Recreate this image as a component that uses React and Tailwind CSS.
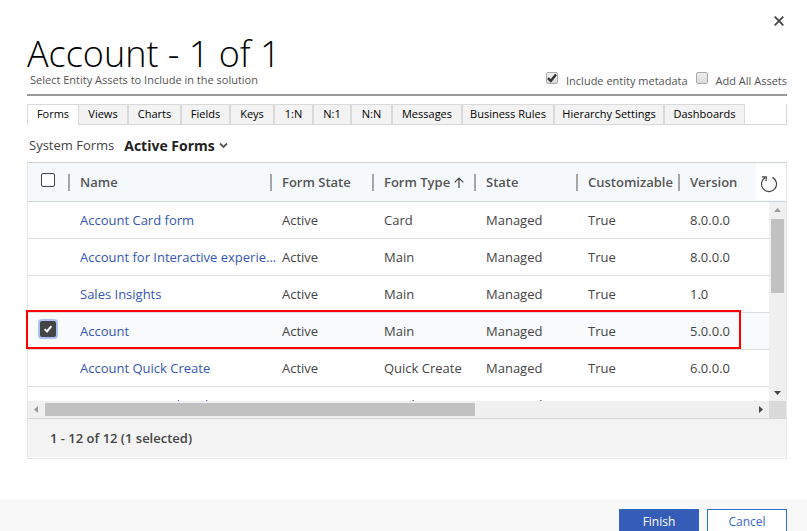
import React from "react";

const tabs = [
  ["Forms", "w-[52px]"],
  ["Views", "w-[50px]"],
  ["Charts", "w-[53px]"],
  ["Fields", "w-[49px]"],
  ["Keys", "w-[44px]"],
  ["1:N", "w-[39px]"],
  ["N:1", "w-[38px]"],
  ["N:N", "w-[41px]"],
  ["Messages", "w-[70px]"],
  ["Business Rules", "w-[92px]"],
  ["Hierarchy Settings", "w-[110px]"],
  ["Dashboards", "w-[80px]"],
];

const columns = [
  ["Name", "w-[202px]"],
  ["Form State", "w-[102px]"],
  ["Form Type", "w-[102px]"],
  ["State", "w-[102px]"],
  ["Customizable", "w-[102px]"],
  ["Version", ""],
];

const rows = [
  ["Account Card form", "Active", "Card", "Managed", "True", "8.0.0.0"],
  ["Account for Interactive experie...", "Active", "Main", "Managed", "True", "8.0.0.0"],
  ["Sales Insights", "Active", "Main", "Managed", "True", "1.0"],
  ["Account", "Active", "Main", "Managed", "True", "5.0.0.0"],
  ["Account Quick Create", "Active", "Quick Create", "Managed", "True", "6.0.0.0"],
  ["Account Hierarchy Tile Form", "Active", "Quick View", "Managed", "True", "5.0.0.0"],
];

function Check({ className }) {
  return (
    <svg viewBox="0 0 12 12" className={className} fill="none" stroke="currentColor" strokeWidth="2.4" aria-hidden="true">
      <path d="M2 6.2 4.8 9 10 2.6" />
    </svg>
  );
}

function Option({ label, checked }) {
  return (
    <label className="flex text-[11px] leading-4 text-[#555]">
      <span className="relative mr-2 h-3 w-3">
        <input
          type="checkbox"
          defaultChecked={checked}
          className="peer block h-3 w-3 appearance-none rounded-xs border border-[#aaa] bg-linear-to-b from-[#eee] to-[#dcdcdc]"
        />
        <Check className="pointer-events-none absolute inset-0 hidden h-3 w-3 text-[#333] peer-checked:block" />
      </span>
      <span className="pt-px">{label}</span>
    </label>
  );
}

export default function App() {
  return (
    <div className="flex h-screen flex-col overflow-hidden bg-white font-['Open_Sans','Noto_Sans',sans-serif] text-[#444]">
      <header className="px-5 pt-3.5">
        <div className="flex justify-end pr-px">
          <button aria-label="Close" className="flex h-3.5 w-3.5 items-center justify-center text-[#444]">
            <svg viewBox="0 0 10 10" className="h-2.5 w-2.5" stroke="currentColor" strokeWidth="1.8" aria-hidden="true">
              <path d="M.7.7 9.3 9.3M9.3.7.7 9.3" />
            </svg>
          </button>
        </div>
      </header>

      <main className="ml-[27px] mr-5 flex-1">
        <div className="flex items-end justify-between border-b-2 border-[#999] pt-2">
          <div className="pb-1.5">
            <h1 className="text-[36px] font-light leading-9 text-black">Account - 1 of 1</h1>
            <p className="ml-[3px] text-[11px] leading-4 text-[#555]">Select Entity Assets to Include in the solution</p>
          </div>
          <div className="flex gap-2 pb-[5px]">
            <Option label="Include entity metadata" checked />
            <Option label="Add All Assets" />
          </div>
        </div>

        <nav role="tablist" className="mt-2 flex h-[21px] border-b border-r border-[#d9d9d9]">
          {tabs.map(([name, width], i) => (
            <button
              key={name}
              role="tab"
              aria-selected={i === 0}
              className={`${width} shrink-0 whitespace-nowrap border-t border-[#d9d9d9] pb-0.5 text-[11px] leading-4 text-black ${
                i === 0 ? "h-[21px] border-l border-r bg-white" : "h-5 border-r-2 bg-[#f3f3f3] last:border-r"
              }`}
            >
              {name}
            </button>
          ))}
        </nav>

        <div className="flex h-[37px] items-center gap-2.5 pl-0.5 pt-1">
          <span className="text-[13px]">System Forms</span>
          <button className="flex items-center gap-1 text-[14px] font-bold text-[#222]">
            Active Forms
            <svg viewBox="0 0 9 7" className="h-[7px] w-[9px]" fill="none" stroke="#555" strokeWidth="1.8" aria-hidden="true">
              <path d="M1 1.5 4.5 5 8 1.5" />
            </svg>
          </button>
        </div>

        <section className="border border-[#e6e6e6] border-t-[#d0d4d8] pb-px">
          <div className="relative flex h-[238px]">
            <div className="min-w-0 flex-1 overflow-hidden">
              <table className="w-full table-fixed border-separate border-spacing-0 text-[13px] leading-5">
                <thead>
                  <tr className="h-[39px] bg-[#f6f9fc]">
                    <th className="w-10 border-b border-[#d0d4d8] pb-1 pl-[13px] text-left">
                      <input type="checkbox" aria-label="Select all" className="block h-3.5 w-3.5 appearance-none rounded-xs border border-[#444] bg-white" />
                    </th>
                    {columns.map(([name, width]) => (
                      <th key={name} className={`${width} border-b border-[#d0d4d8] p-0 text-left font-semibold text-[#555]`}>
                        <div className="flex items-center">
                          <span className="mr-2.5 h-[17px] w-0.5 shrink-0 bg-[#a6a6a6]" />
                          <span className="whitespace-nowrap">{name}</span>
                          {name === "Form Type" && (
                            <svg viewBox="0 0 10 11" className="ml-1 h-[11px] w-2.5 shrink-0" fill="none" stroke="#444" strokeWidth="1.2" aria-hidden="true">
                              <path d="M5 11V1M.7 5.3 5 1l4.3 4.3" />
                            </svg>
                          )}
                        </div>
                      </th>
                    ))}
                  </tr>
                </thead>
                <tbody>
                  {rows.map((row, i) => (
                    <tr key={row[0]} className={`h-[37px] ${i === 3 ? "bg-[#f8fafc]" : "bg-white"}`}>
                      <td className="border-b border-[#ddd] p-0 pb-1 pl-3">
                        {i === 3 && (
                          <span className="relative block h-4 w-4">
                            <input
                              type="checkbox"
                              aria-label="Select Account"
                              defaultChecked
                              className="block h-4 w-4 appearance-none rounded-xs bg-[#444] ring-2 ring-[#a9c0f5]"
                            />
                            <Check className="pointer-events-none absolute left-[3px] top-[3px] h-2.5 w-2.5 text-white" />
                          </span>
                        )}
                      </td>
                      {row.map((cell, j) => (
                        <td key={j} className="whitespace-nowrap border-b border-[#ddd] p-0 pl-3">
                          {j === 0 ? (
                            <a href="#form" className="text-[#3556b4]">
                              {cell}
                            </a>
                          ) : (
                            cell
                          )}
                        </td>
                      ))}
                    </tr>
                  ))}
                </tbody>
              </table>
            </div>

            <div className="flex w-[17px] flex-col">
              <div className="h-[39px] shrink-0 border-b border-[#d0d4d8] bg-[#f6f9fc]" />
              <div className="flex flex-1 flex-col items-center bg-[#f0f0f0] pb-1.5 pt-1.5">
                <svg viewBox="0 0 7 4" className="h-1 w-[7px]" fill="#999" aria-hidden="true">
                  <path d="M0 4 3.5 0 7 4z" />
                </svg>
                <div className="mt-[7px] h-[74px] w-[13px] bg-[#c1c1c1]" />
                <svg viewBox="0 0 7 4" className="mt-auto h-1 w-[7px]" fill="#444" aria-hidden="true">
                  <path d="M0 0h7L3.5 4z" />
                </svg>
              </div>
            </div>

            <button aria-label="Refresh" className="absolute right-0 top-px flex h-9 w-[30px] items-center justify-center bg-white pr-1 pt-1">
              <svg viewBox="0 0 18 18" className="h-[18px] w-[18px]" fill="none" stroke="#444" strokeWidth="1.2" aria-hidden="true">
                <path d="M12.5 2.4A7.5 7.5 0 1 1 5 2.7M2 1.8h4.2V6" />
              </svg>
            </button>
            <div className="pointer-events-none absolute -left-0.5 right-[45px] top-[147px] h-[39px] border-2 border-[#f00]" />
          </div>

          <div className="flex h-[17px] bg-[#f0f0f0]">
            <div className="flex flex-1 items-center px-1.5">
              <svg viewBox="0 0 4 7" className="h-[7px] w-1" fill="#999" aria-hidden="true">
                <path d="M4 0v7L0 3.5z" />
              </svg>
              <div className="ml-[7px] h-[13px] w-[59%] bg-[#c1c1c1]" />
              <svg viewBox="0 0 4 7" className="ml-auto h-[7px] w-1" fill="#444" aria-hidden="true">
                <path d="M0 0v7l4-3.5z" />
              </svg>
            </div>
            <div className="w-[17px] bg-[#dadada]" />
          </div>
          <div className="h-[39px] border-t border-[#d6d6d6] bg-[#f3f3f3] pl-[22px] text-[13px] font-semibold leading-[38px]">
            1 - 12 of 12 (1 selected)
          </div>
        </section>
      </main>

      <footer className="flex h-8 shrink-0 justify-end gap-2 bg-[#f8f8f8] pr-5 pt-2.5 text-[12px] leading-6">
        <button className="h-[26px] w-20 border border-[#2f66c8] bg-[#355cb6] text-white">Finish</button>
        <button className="h-[26px] w-20 border border-[#2f6fd0] bg-white text-[#3a68c8]">Cancel</button>
      </footer>
    </div>
  );
}
